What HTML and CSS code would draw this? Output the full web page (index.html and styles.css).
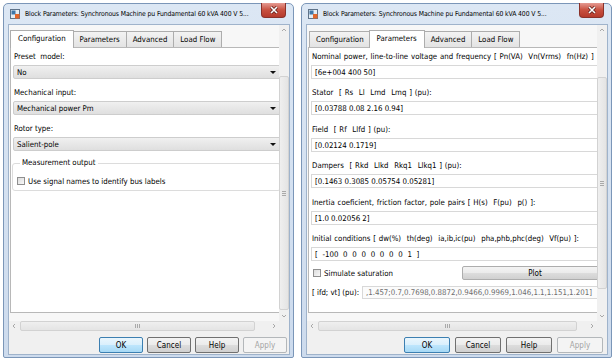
FILE: index.html
```html
<!DOCTYPE html>
<html lang="en">
<head>
<meta charset="UTF-8">
<meta name="viewport" content="width=device-width, initial-scale=1.0">
<title>Block Parameters</title>
<link rel="stylesheet" href="styles.css">
</head>
<body>

<div class="desktop">

    <!-- Configuration tab -->
    <div class="window left">
        <div class="titlebar">
            <svg class="app-icon" width="10" height="10" viewBox="0 0 10 10">
                <rect x="0.5" y="0.5" width="9" height="9" fill="#e4edf4" stroke="#5f7389"/>
                <rect x="1.5" y="1.5" width="4" height="4" fill="#3f77a8"/>
                <rect x="5" y="5" width="4.5" height="4.5" fill="#e2672b"/>
            </svg>
            <span class="title">Block Parameters: Synchronous Machine pu Fundamental 60 kVA 400 V 5...</span>
            <div class="close">
                <svg width="10" height="8" viewBox="0 0 10 8">
                    <path d="M2 1 L8 7 M8 1 L2 7" stroke="#5b1c18" stroke-width="3"/>
                    <path d="M2 1 L8 7 M8 1 L2 7" stroke="#ffffff" stroke-width="1.6"/>
                </svg>
            </div>
        </div>
        <div class="client">
            <div class="scroller">
                <div class="viewport">
                    <div class="tabs">
                        <div class="tab active">Configuration</div>
                        <div class="tab">Parameters</div>
                        <div class="tab">Advanced</div>
                        <div class="tab">Load Flow</div>
                    </div>
                    <div class="pane">
                        <div class="label">Preset&nbsp; model:</div>
                        <div class="select">No<span class="arrow"></span></div>
                        <div class="label">Mechanical input:</div>
                        <div class="select">Mechanical power Pm<span class="arrow"></span></div>
                        <div class="label">Rotor type:</div>
                        <div class="select">Salient-pole<span class="arrow"></span></div>
                        <fieldset class="group">
                            <legend>Measurement output</legend>
                            <div class="check"><span class="box"></span>Use signal names to identify bus labels</div>
                        </fieldset>
                    </div>
                </div>
                <div class="vscroll">
                    <svg class="arrow-btn" width="10" height="10" viewBox="0 0 10 10"><path d="M3 6 L5 4 L7 6" fill="none" stroke="#a8a8a8"/></svg>
                    <div class="vtrack"><div class="vthumb"><span class="grip-h"></span></div></div>
                    <svg class="arrow-btn" width="10" height="10" viewBox="0 0 10 10"><path d="M3 4 L5 6 L7 4" fill="none" stroke="#a8a8a8"/></svg>
                </div>
                <div class="hscroll">
                    <svg class="arrow-btn" width="10" height="10" viewBox="0 0 10 10"><path d="M6 3 L4 5 L6 7" fill="none" stroke="#a8a8a8"/></svg>
                    <div class="htrack"><div class="hthumb"><span class="grip-v"></span></div></div>
                    <svg class="arrow-btn" width="10" height="10" viewBox="0 0 10 10"><path d="M4 3 L6 5 L4 7" fill="none" stroke="#a8a8a8"/></svg>
                </div>
                <div class="corner"></div>
            </div>
            <div class="buttons">
                <button class="btn default">OK</button>
                <button class="btn">Cancel</button>
                <button class="btn">Help</button>
                <button class="btn disabled">Apply</button>
            </div>
        </div>
    </div>

    <!-- Parameters tab -->
    <div class="window right">
        <div class="titlebar">
            <svg class="app-icon" width="10" height="10" viewBox="0 0 10 10">
                <rect x="0.5" y="0.5" width="9" height="9" fill="#e4edf4" stroke="#5f7389"/>
                <rect x="1.5" y="1.5" width="4" height="4" fill="#3f77a8"/>
                <rect x="5" y="5" width="4.5" height="4.5" fill="#e2672b"/>
            </svg>
            <span class="title">Block Parameters: Synchronous Machine pu Fundamental 60 kVA 400 V 5...</span>
            <div class="close">
                <svg width="10" height="8" viewBox="0 0 10 8">
                    <path d="M2 1 L8 7 M8 1 L2 7" stroke="#5b1c18" stroke-width="3"/>
                    <path d="M2 1 L8 7 M8 1 L2 7" stroke="#ffffff" stroke-width="1.6"/>
                </svg>
            </div>
        </div>
        <div class="client">
            <div class="scroller">
                <div class="viewport">
                    <div class="tabs">
                        <div class="tab">Configuration</div>
                        <div class="tab active">Parameters</div>
                        <div class="tab">Advanced</div>
                        <div class="tab">Load Flow</div>
                    </div>
                    <div class="pane">
                        <div class="label">Nominal power, line-to-line voltage and frequency [ Pn(VA)&nbsp; Vn(Vrms)&nbsp; fn(Hz) ]</div>
                        <div class="field">[6e+004 400 50]</div>
                        <div class="label">Stator&nbsp; [ Rs&nbsp; Ll&nbsp; Lmd&nbsp; Lmq ] (pu):</div>
                        <div class="field">[0.03788 0.08 2.16 0.94]</div>
                        <div class="label">Field&nbsp; [ Rf&nbsp; Llfd ] (pu):</div>
                        <div class="field">[0.02124 0.1719]</div>
                        <div class="label">Dampers&nbsp; [ Rkd&nbsp; Llkd&nbsp; Rkq1&nbsp; Llkq1 ] (pu):</div>
                        <div class="field">[0.1463 0.3085 0.05754 0.05281]</div>
                        <div class="label">Inertia coeficient, friction factor, pole pairs [ H(s)&nbsp; F(pu)&nbsp; p() ]:</div>
                        <div class="field">[1.0 0.02056 2]</div>
                        <div class="label">Initial conditions [ dw(%)&nbsp; th(deg)&nbsp; ia,ib,ic(pu)&nbsp; pha,phb,phc(deg)&nbsp; Vf(pu) ]:</div>
                        <div class="field spaced">[ -100 0 0 0 0 0 0 0 1 ]</div>
                        <div class="row">
                            <div class="check"><span class="box"></span>Simulate saturation</div>
                            <button class="btn plot">Plot</button>
                        </div>
                        <div class="row">
                            <span class="inline-label">[ ifd; vt] (pu):</span>
                            <div class="field muted">,1.457;0.7,0.7698,0.8872,0.9466,0.9969,1.046,1.1,1.151,1.201]</div>
                        </div>
                    </div>
                </div>
                <div class="vscroll">
                    <svg class="arrow-btn" width="10" height="10" viewBox="0 0 10 10"><path d="M3 6 L5 4 L7 6" fill="none" stroke="#a8a8a8"/></svg>
                    <div class="vtrack"><div class="vthumb"><span class="grip-h"></span></div></div>
                    <svg class="arrow-btn" width="10" height="10" viewBox="0 0 10 10"><path d="M3 4 L5 6 L7 4" fill="none" stroke="#a8a8a8"/></svg>
                </div>
                <div class="hscroll">
                    <svg class="arrow-btn" width="10" height="10" viewBox="0 0 10 10"><path d="M6 3 L4 5 L6 7" fill="none" stroke="#a8a8a8"/></svg>
                    <div class="htrack"><div class="hthumb"><span class="grip-v"></span></div></div>
                    <svg class="arrow-btn" width="10" height="10" viewBox="0 0 10 10"><path d="M4 3 L6 5 L4 7" fill="none" stroke="#a8a8a8"/></svg>
                </div>
                <div class="corner"></div>
            </div>
            <div class="buttons">
                <button class="btn default">OK</button>
                <button class="btn">Cancel</button>
                <button class="btn">Help</button>
                <button class="btn disabled">Apply</button>
            </div>
        </div>
    </div>

</div>

</body>
</html>
```

FILE: styles.css
```css
body {
    margin: 0;
    background-color: #ffffff;
    font-family: "DejaVu Sans Condensed", "DejaVu Sans", sans-serif;
    font-size: 7.8px;
    color: #000000;
}
.desktop {
    display: flex;
    gap: 7px;
    padding: 3px 0 0 3px;
}
.window {
    flex: none;
    min-width: 0;
    box-sizing: border-box;
    height: 355px;
    border: 1px solid #7b96b8;
    border-radius: 5px 5px 2px 2px;
    background: linear-gradient(#dce7f4, #cddbed);
    padding: 0 3px 2px 4px;
    display: flex;
    flex-direction: column;
}
.left {
    width: 291px;
}
.right {
    width: 311px;
}
.titlebar {
    height: 20px;
    flex: none;
    display: flex;
    align-items: center;
    padding-left: 2px;
    min-width: 0;
}
.app-icon {
    flex: none;
    margin-right: 5px;
}
.title {
    flex: 1;
    min-width: 0;
    white-space: nowrap;
    font-size: 6.8px;
    letter-spacing: -0.1px;
}
.close {
    flex: none;
    align-self: flex-start;
    margin: -1px 4px 0 6px;
    width: 25px;
    height: 15px;
    box-sizing: border-box;
    border: 1px solid #8a3129;
    border-top: none;
    border-radius: 0 0 4px 4px;
    background: linear-gradient(#e59a92, #c8503f 50%, #b53a2c);
    display: flex;
    align-items: center;
    justify-content: center;
}
.client {
    flex: 1;
    min-width: 0;
    border: 1px solid #9fb3cb;
    background-color: #f0f0f0;
    display: flex;
    flex-direction: column;
}
.scroller {
    height: 306px;
    display: grid;
    grid-template-columns: minmax(0, 1fr) 10px;
    grid-template-rows: 1fr 10px;
}
.viewport {
    overflow: hidden;
    background-color: #f7f7f7;
    padding: 5px 0 0 1px;
}
.tabs {
    display: flex;
    align-items: flex-end;
    height: 17px;
    padding-left: 1px;
}
.tab {
    height: 15px;
    line-height: 15px;
    padding: 0 6px;
    border: 1px solid #adadad;
    border-bottom: none;
    margin-right: -1px;
    background: linear-gradient(#f3f3f3, #e3e3e3);
    white-space: nowrap;
}
.tab.active {
    height: 17px;
    line-height: 16px;
    margin: 0 -1px -1px -1px;
    padding: 0 7px;
    background: #ffffff;
    position: relative;
    z-index: 1;
}
.pane {
    box-sizing: border-box;
    height: 266px;
    border: 1px solid #b8b8b8;
    background-color: #ffffff;
    padding: 0 4px 0 2px;
}
.left .pane {
    width: 276px;
}
.right .pane {
    width: 302px;
}
.label {
    height: 17px;
    line-height: 17px;
    padding-left: 1px;
    white-space: nowrap;
}
.right .label {
    word-spacing: 0.6px;
}
.select {
    position: relative;
    height: 14px;
    line-height: 13px;
    box-sizing: border-box;
    border: 1px solid #cdcdcd;
    border-radius: 2px;
    background: linear-gradient(#f0f0f0, #dfdfdf);
    padding-left: 3px;
    margin-bottom: 5px;
}
.arrow {
    position: absolute;
    right: 4px;
    top: 5px;
    border-left: 3px solid transparent;
    border-right: 3px solid transparent;
    border-top: 3px solid #111111;
}
.field {
    height: 14px;
    line-height: 13px;
    box-sizing: border-box;
    border: 1px solid #d8d8d8;
    background-color: #ffffff;
    padding-left: 3px;
    margin-bottom: 5.4px;
    white-space: pre;
    overflow: hidden;
}
.field.spaced {
    word-spacing: 2.5px;
}
.group {
    margin: 6px 0 0 -1px;
    padding: 6px 4px 3px;
    border: 1px solid #dcdcdc;
    border-radius: 3px;
}
.group legend {
    padding: 0 2px;
    margin-left: 3px;
    line-height: 12px;
}
.check {
    display: flex;
    align-items: center;
    height: 12px;
    white-space: nowrap;
}
.box {
    width: 8px;
    height: 8px;
    box-sizing: border-box;
    border: 1px solid #8f8f8f;
    background: linear-gradient(135deg, #dcdcdc, #f8f8f8);
    margin-right: 3px;
}
.row {
    display: flex;
    align-items: center;
    margin-top: 1px;
    padding-left: 2px;
}
.row + .row {
    margin-top: 6px;
    padding-left: 1px;
}
.inline-label {
    white-space: nowrap;
    margin-right: 3px;
}
.field.muted {
    flex: 1;
    margin: 0;
    height: 13px;
    line-height: 11px;
    color: #6e6e6e;
    background-color: #fbfbfb;
}
.vscroll {
    display: flex;
    flex-direction: column;
    background-color: #f0f0f0;
}
.vtrack {
    flex: 1;
    padding-top: 41px;
}
.left .vthumb {
    height: 234px;
}
.right .vthumb {
    margin-top: 1px;
    height: 212px;
}
.vthumb,
.hthumb {
    box-sizing: border-box;
    border: 1px solid #d2d2d2;
    border-radius: 2px;
    background: linear-gradient(90deg, #efefef, #e4e4e4);
    display: flex;
    align-items: center;
    justify-content: center;
}
.hthumb {
    height: 10px;
    background: linear-gradient(#efefef, #e4e4e4);
}
.grip-h {
    width: 4px;
    height: 5px;
    background: repeating-linear-gradient(#a9a9a9 0 1px, transparent 1px 2px);
}
.grip-v {
    width: 5px;
    height: 4px;
    background: repeating-linear-gradient(90deg, #a9a9a9 0 1px, transparent 1px 2px);
}
.hscroll {
    display: flex;
    background-color: #f0f0f0;
}
.htrack {
    flex: 1;
}
.left .htrack {
    padding: 0 14px 0 1px;
}
.right .htrack {
    padding: 0 10px 0 1px;
}
.corner {
    background-color: #f0f0f0;
}
.buttons {
    display: flex;
    justify-content: flex-end;
    gap: 4px;
    padding: 6px 2px 0 0;
}
.right .buttons {
    gap: 5px;
    padding-right: 4px;
}
.btn {
    width: 44px;
    height: 16px;
    padding: 0;
    font-family: inherit;
    font-size: 8px;
    color: #000000;
    border: 1px solid #707070;
    border-radius: 2px;
    background: linear-gradient(#f3f3f3, #ebebeb 50%, #dddddd 50%, #d0d0d0);
}
.right .btn {
    width: 46px;
}
.btn.default {
    border-color: #3c7fb1;
    background: linear-gradient(#eaf6fd, #d9effc 50%, #bee6fd 50%, #a7d9f5);
}
.btn.disabled {
    color: #a3a3a3;
    border-color: #b3b7ba;
    background: #f4f4f4;
}
.right .btn.plot {
    flex: none;
    width: 146px;
    height: 14px;
    margin-left: auto;
    margin-right: -3px;
    border-color: #adadad;
}
```
